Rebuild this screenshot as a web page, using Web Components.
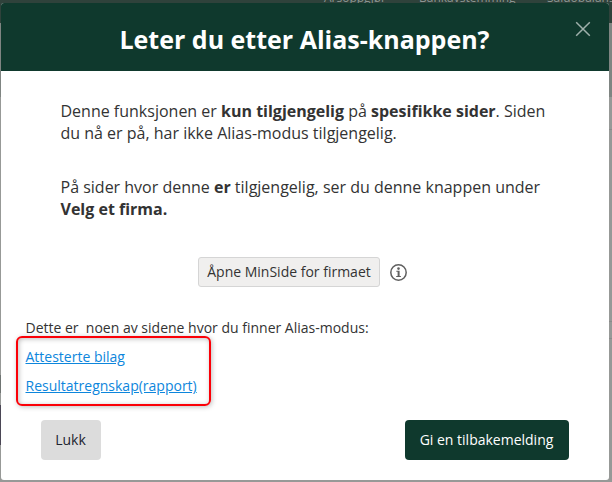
<!DOCTYPE html>
<html lang="nb">
<head>
<meta charset="utf-8">
<title>Alias-knappen</title>
<style>
  body {
    margin: 0;
    overflow: hidden;
    font-family: "Open Sans", "Noto Sans", sans-serif;
    color: #333;
  }
</style>
</head>
<body>
<page-backdrop>
  <alias-dialog>
    <span slot="title">Leter du etter Alias-knappen?</span>
    <p>Denne funksjonen er <b>kun tilgjengelig</b> på <b>spesifikke sider</b>. Siden<br>du nå er på, har ikke Alias-modus tilgjengelig.</p>
    <p>På sider hvor denne <b>er</b> tilgjengelig, ser du denne knappen under<br><b>Velg et firma.</b></p>
    <minside-preview slot="preview">Åpne MinSide for firmaet</minside-preview>
    <link-list slot="links">
      <span slot="intro">Dette er&nbsp; noen av sidene hvor du finner Alias-modus:</span>
      <a href="#">Attesterte bilag</a>
      <a href="#">Resultatregnskap(rapport)</a>
    </link-list>
    <dialog-button slot="actions">Lukk</dialog-button>
    <dialog-button slot="actions" primary>Gi en tilbakemelding</dialog-button>
  </alias-dialog>
</page-backdrop>

<script>
class PageBackdrop extends HTMLElement {
  constructor() {
    super();
    const shadow = this.attachShadow({ mode: 'open' });
    shadow.innerHTML = `
      <style>
        :host {
          display: block;
          position: relative;
          box-sizing: border-box;
          width: 612px;
          height: 482px;
          padding: 3px 3px 2px 1px;
          overflow: hidden;
          background:
            linear-gradient(#4a4655, #4a4655) 0 405px / 1px 40px no-repeat,
            linear-gradient(#6f7472, #6f7472) 0 375px / 1px 18px no-repeat,
            linear-gradient(#8a8a8a, #8a8a8a) 100% 129px / 3px 1px no-repeat,
            linear-gradient(#8a8a8a, #8a8a8a) 100% 321px / 3px 1px no-repeat,
            linear-gradient(#8a8a8a, #8a8a8a) 100% 338px / 3px 1px no-repeat,
            linear-gradient(#2f423b 23px, #7f8582 23px 97px, #979997 97px);
        }
        /* menu of the page behind, only its lowest pixels stick out */
        nav span {
          position: absolute;
          top: -11px;
          font-size: 12px;
          line-height: 17px;
          color: #8d9692;
          white-space: nowrap;
        }
        nav span:nth-child(1) { left: 324px; }
        nav span:nth-child(2) { left: 419px; }
        nav span:nth-child(3) { left: 547px; }
        ::slotted(*) { position: relative; }
      </style>
      <nav><span>Årsoppgjør</span><span>Bankavstemming</span><span>Saldobalanse</span></nav>
      <slot></slot>
    `;
  }
}

class AliasDialog extends HTMLElement {
  constructor() {
    super();
    const shadow = this.attachShadow({ mode: 'open' });
    shadow.innerHTML = `
      <style>
        :host {
          display: flex;
          flex-direction: column;
          box-sizing: border-box;
          height: 477px;
          border-radius: 3px;
          overflow: hidden;
          background: #fff;
        }
        header {
          position: relative;
          display: flex;
          align-items: center;
          justify-content: center;
          height: 68px;
          padding: 4px 1px 0 0;
          box-sizing: border-box;
          background: #0f392d;
        }
        h1 {
          margin: 0;
          font-size: 25px;
          line-height: 34px;
          font-weight: 700;
          color: #fff;
          white-space: nowrap;
        }
        .close {
          position: absolute;
          top: 18px;
          right: 18px;
          width: 16px;
          height: 16px;
        }
        .text {
          padding: 29px 0 0 59.5px;
          font-size: 16px;
          line-height: 22px;
          white-space: nowrap;
        }
        ::slotted(p) { margin: 0 0 32px; }
        footer {
          display: flex;
          justify-content: space-between;
          padding: 14px 40px 0;
        }
      </style>
      <header>
        <h1><slot name="title"></slot></h1>
        <svg class="close" viewBox="0 0 16 16" fill="none" stroke="#9fb0ab" stroke-width="1.5">
          <path d="M1.2 1.2 14.8 14.8M14.8 1.2 1.2 14.8"/>
        </svg>
      </header>
      <div class="text"><slot></slot></div>
      <slot name="preview"></slot>
      <slot name="links"></slot>
      <footer><slot name="actions"></slot></footer>
    `;
  }
}

class MinsidePreview extends HTMLElement {
  constructor() {
    super();
    const shadow = this.attachShadow({ mode: 'open' });
    shadow.innerHTML = `
      <style>
        :host {
          display: flex;
          align-items: center;
          gap: 10px;
          margin: 5px 0 0 197px;
        }
        .button {
          box-sizing: border-box;
          width: 182px;
          height: 30px;
          border: 1px solid #d5d5d5;
          border-radius: 3px;
          background: #f0efee;
          font-size: 14px;
          line-height: 28px;
          text-align: center;
          white-space: nowrap;
        }
        svg { width: 17px; height: 17px; }
      </style>
      <div class="button"><slot></slot></div>
      <svg viewBox="0 0 17 17">
        <circle cx="8.5" cy="8.5" r="7.7" fill="none" stroke="#606060" stroke-width="1.5"/>
        <circle cx="8.5" cy="4.6" r="1.3" fill="#606060"/>
        <path d="M6.3 6.7h3.3v5.2h1.3v1.1H6.2v-1.1h1.4V7.8H6.3z" fill="#606060"/>
      </svg>
    `;
  }
}

class LinkList extends HTMLElement {
  constructor() {
    super();
    const shadow = this.attachShadow({ mode: 'open' });
    shadow.innerHTML = `
      <style>
        :host {
          display: block;
          margin: 31px 0 0 15px;
          font-size: 14px;
          line-height: 19px;
          white-space: nowrap;
        }
        .intro { padding-left: 9.5px; }
        .frame {
          display: flex;
          flex-direction: column;
          align-items: flex-start;
          gap: 10px;
          box-sizing: border-box;
          width: 195px;
          height: 70px;
          margin-top: -1px;
          padding: 9px 0 0 7.5px;
          border: 2px solid #fb0007;
          border-radius: 6px;
          box-shadow: 1px 1px 5px rgba(0, 0, 0, .25), inset 1px 1px 5px rgba(0, 0, 0, .25);
        }
        ::slotted(a) { color: #0d86dc; text-decoration: underline; }
      </style>
      <div class="intro"><slot name="intro"></slot></div>
      <div class="frame"><slot></slot></div>
    `;
  }
}

class DialogButton extends HTMLElement {
  constructor() {
    super();
    const shadow = this.attachShadow({ mode: 'open' });
    shadow.innerHTML = `
      <style>
        :host {
          display: flex;
          align-items: center;
          justify-content: center;
          box-sizing: border-box;
          width: 60px;
          height: 40px;
          padding: 0 1px 2px 0;
          border-radius: 4px;
          background: #dcdcdc;
          color: #1e2430;
          font-size: 14px;
          white-space: nowrap;
        }
        :host([primary]) {
          width: 164px;
          background: #0f392d;
          color: #fff;
        }
      </style>
      <slot></slot>
    `;
  }
}

customElements.define('page-backdrop', PageBackdrop);
customElements.define('alias-dialog', AliasDialog);
customElements.define('minside-preview', MinsidePreview);
customElements.define('link-list', LinkList);
customElements.define('dialog-button', DialogButton);
</script>
</body>
</html>
